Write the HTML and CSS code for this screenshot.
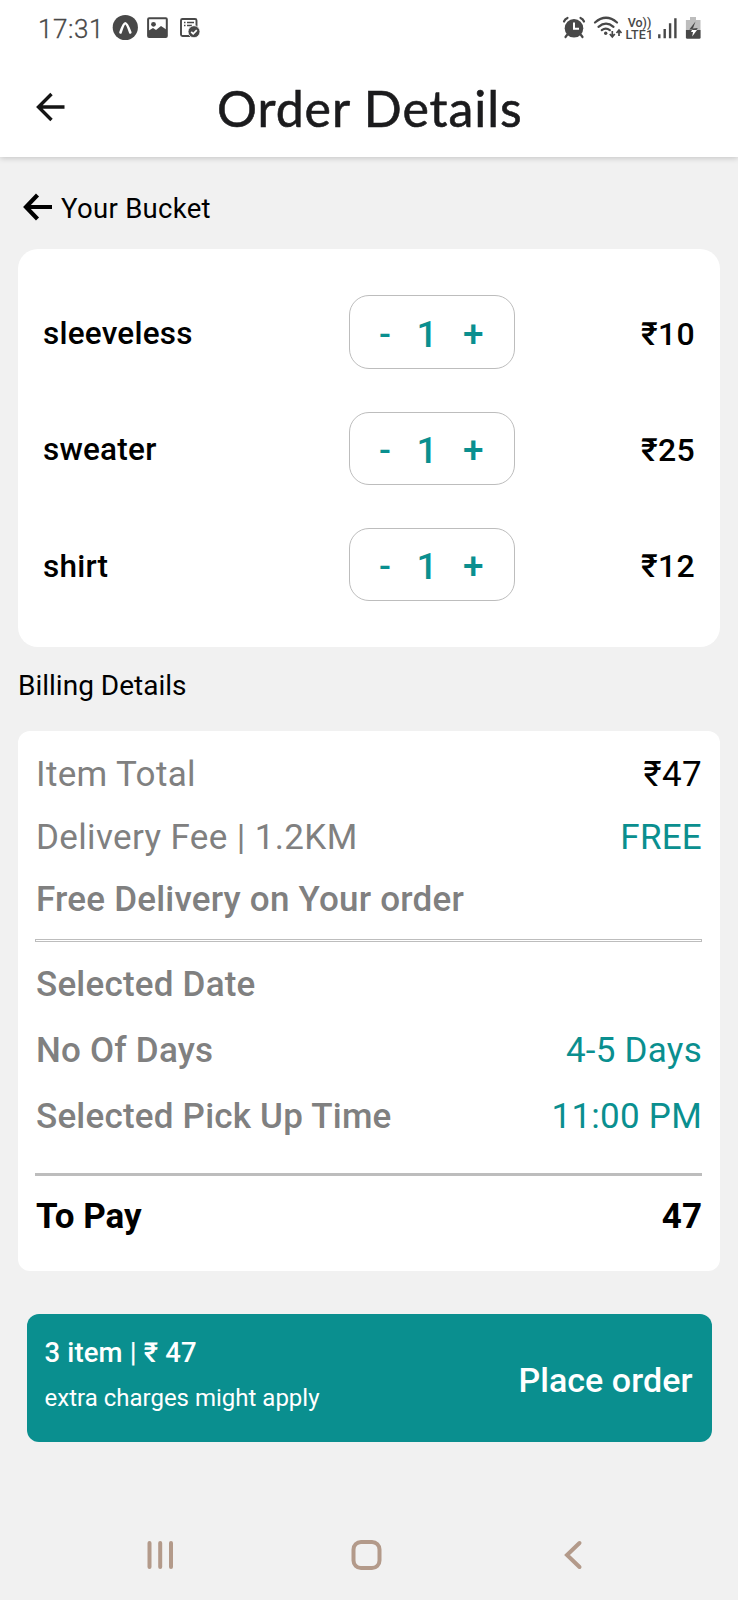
FILE: index.html
```html
<!DOCTYPE html>
<html lang="en">
<head>
<meta charset="utf-8">
<title>Order Details</title>
<link rel="stylesheet" href="styles.css">
</head>
<body>
<div class="screen">
  <header class="top">
    <div class="status">
      <span class="clock">17:31</span>
      <svg class="notif" width="90" height="28" viewBox="111 14 90 28">
        <circle cx="125.300" cy="27.500" r="12.600" fill="#484848"/>
        <path d="M120.500 32.500Q123.600 23.300 125.300 23.300T130.300 32.500" fill="none" stroke="#fff" stroke-width="2.600" stroke-linecap="round"/>
        <rect x="148.100" y="18.200" width="18.700" height="18.700" rx="1" fill="#fff" stroke="#484848" stroke-width="2"/>
        <circle cx="153.500" cy="24.300" r="2.400" fill="#484848"/>
        <path d="M148 31l5-3 3 2 5-4 6 4v7h-19z" fill="#484848"/>
        <rect x="181" y="19" width="15.500" height="17" rx="1.500" fill="none" stroke="#484848" stroke-width="1.900"/>
        <path d="M184 22.500h1.500M187 22.500h7M184 25.500h1.500M187 25.500h5" stroke="#484848" stroke-width="1.400"/>
        <circle cx="194" cy="31.700" r="6" fill="#484848" stroke="#fff" stroke-width=".8"/>
        <path d="M191.200 31.800l2 2 3.600-3.600" fill="none" stroke="#fff" stroke-width="1.700"/>
      </svg>
      <span class="grow"></span>
      <svg class="alarm" width="62" height="26" viewBox="561 15 62 26">
        <circle cx="574" cy="28.300" r="9.300" fill="#484848"/>
        <path d="M574 22.500v6.200h5" fill="none" stroke="#fff" stroke-width="2"/>
        <path d="M564 21.500q1-2.500 3.500-3.500M580.500 18q2.500 1 3.500 3.500M567 35l-1.500 2M581 35l1.500 2" fill="none" stroke="#484848" stroke-width="2.200" stroke-linecap="round"/>
        <path d="M595 22.500q11-9.500 22 0M598.500 26.800q7.500-6.300 15 0M601.800 30.200q4-3 8 0" fill="none" stroke="#484848" stroke-width="2.200" stroke-linecap="round"/>
        <circle cx="605.700" cy="33.200" r="1.700" fill="#484848"/>
        <path d="M612.300 31v5.500M609.800 34l2.500 3 2.500-3M619 36v-5.500M616.500 33l2.500-3 2.500 3" fill="none" stroke="#484848" stroke-width="1.700"/>
      </svg>
      <span class="volte"><span>Vo))</span><span class="lte">LTE1</span></span>
      <svg class="signal" width="46" height="26" viewBox="656 15 46 26">
        <path d="M659.300 34.300v4M664.700 29v9.300M670.100 23.200v15.100M675.400 18.300v20" stroke="#484848" stroke-width="2.400"/>
        <path d="M690 17h6v3h4.500v10h-14.600V20h4.100z" fill="#bdbdbd"/>
        <path d="M685.900 30h14.700v7.500q0 1.300-1.300 1.300h-12q-1.400 0-1.400-1.300z" fill="#484848"/>
        <path d="M695.500 21.500l-6.200 8h3.200z M692.500 28.500l5.300-.5-1.300 2h-4z" fill="#484848"/>
        <path d="M692 30h5l-4.800 6.500.8-4.500h-2z" fill="#fff"/>
      </svg>
    </div>
    <div class="appbar">
      <svg class="back" width="30" height="30" viewBox="0 0 30 30"><path d="M29.500 15H3.500M16.500 2L3.500 15l13 13" fill="none" stroke="#151515" stroke-width="3.400"/></svg>
      <h1>Order Details</h1>
    </div>
  </header>

  <main>
    <div class="bucket">
      <svg width="30" height="28" viewBox="0 0 30 28"><path d="M29 14H4M14.500 2L3 14l11.500 12" fill="none" stroke="#000" stroke-width="4.200"/></svg>
      <span>Your Bucket</span>
    </div>

    <section class="card items">
      <div class="item"><span class="name">sleeveless</span><span class="stepper"><b class="minus">-</b><b class="qty">1</b><b class="plus">+</b></span><span class="price">₹10</span></div>
      <div class="item"><span class="name">sweater</span><span class="stepper"><b class="minus">-</b><b class="qty">1</b><b class="plus">+</b></span><span class="price">₹25</span></div>
      <div class="item"><span class="name">shirt</span><span class="stepper"><b class="minus">-</b><b class="qty">1</b><b class="plus">+</b></span><span class="price">₹12</span></div>
    </section>

    <h2>Billing Details</h2>

    <section class="card bill">
      <div class="line"><span>Item Total</span><span class="black">₹47</span></div>
      <div class="line"><span>Delivery Fee | 1.2KM</span><span class="teal">FREE</span></div>
      <div class="line"><span class="medium">Free Delivery on Your order</span></div>
      <div class="rule double"></div>
      <div class="line tall"><span class="medium">Selected Date</span></div>
      <div class="line tall"><span class="medium">No Of Days</span><span class="teal">4-5 Days</span></div>
      <div class="line tall"><span class="medium">Selected Pick Up Time</span><span class="teal">11:00 PM</span></div>
      <div class="rule solid"></div>
      <div class="line total"><span>To Pay</span><span>47</span></div>
    </section>

    <div class="order">
      <div class="summary"><span class="count">3 item | ₹ 47</span><span class="extra">extra charges might apply</span></div>
      <span class="place">Place order</span>
    </div>
  </main>

  <nav>
    <svg width="28" height="32" viewBox="0 0 28 32"><path d="M3.500 4v24M14.200 4v24M25 4v24" stroke="#b39a8a" stroke-width="4" stroke-linecap="round"/></svg>
    <svg width="32" height="32" viewBox="0 0 32 32"><rect x="3.500" y="3" width="26" height="26" rx="7.500" fill="none" stroke="#b39a8a" stroke-width="4"/></svg>
    <svg width="22" height="32" viewBox="0 0 22 32"><path d="M17.500 4L5 16l12.500 12" fill="none" stroke="#b39a8a" stroke-width="4" stroke-linecap="round"/></svg>
  </nav>
</div>
</body>
</html>
```

FILE: styles.css
```css
* { box-sizing: border-box; }
body { margin: 0; font-family: Roboto, "Noto Sans", sans-serif; color: #000; background: #f1f1f1; }
.screen { width: 738px; height: 1600px; background: #f1f1f1; display: flex; flex-direction: column; overflow: hidden; }
svg { display: block; flex: none; }
span, b, h1, h2 { white-space: nowrap; }
.top { height: 157px; background: #fff; box-shadow: 0 1px 6px rgba(0, 0, 0, .2); }
.status { height: 56px; display: flex; align-items: center; padding: 0 36px 0 38px; color: #484848; }
.clock { font-size: 26px; width: 73px; line-height: 58px; padding-top: 2px; font-weight: 300; letter-spacing: .6px; -webkit-text-stroke: .3px #484848; }
.grow { flex: 1; }
.volte { display: flex; flex-direction: column; align-items: center; width: 33px; font-size: 12.5px; line-height: 12px; font-weight: 500; padding-top: 1px; }
.lte { letter-spacing: .2px; }
.appbar { height: 101px; display: flex; align-items: center; padding-left: 35px; }
.back { margin-top: 1px; }
h1 { margin: 2px 0 0 152px; font: 400 50px/60px Lato, "Open Sans", sans-serif; letter-spacing: .95px; color: #1b1b1d; -webkit-text-stroke: .6px #1b1b1d; }
main { padding: 0 18px; }
.bucket { height: 92px; display: flex; align-items: center; gap: 8px; padding: 7px 0 0 5px; font-size: 27.5px; letter-spacing: .3px; }
.bucket span { padding-top: 3px; }
.card { background: #fff; }
.items { height: 398px; border-radius: 20px; padding: 46px 25px 0 25px; display: flex; flex-direction: column; gap: 42.300px; }
.item { height: 74px; display: flex; align-items: center; font-size: 31.500px; font-weight: 500; }
.name { width: 306px; padding-top: 3px; letter-spacing: .22px; }
.stepper { width: 165.500px; height: 73.500px; border: 1px solid #bdbdbd; border-radius: 20px; display: grid; grid-template-columns: 70px 14px 1fr; align-items: center; color: #0a8f8f; padding: 4px 1px 0 0; }
.stepper b { font-weight: 500; text-align: center; }
.minus { font-size: 35px; }
.stepper .qty { font-size: 37px; justify-self: center; }
.plus { font-size: 37px; }
.price { margin-left: auto; padding-top: 3px; font-size: 32px; letter-spacing: .3px; }
h2 { margin: 0; height: 84px; font-size: 28px; font-weight: 400; line-height: 78px; }
.bill { height: 540px; border-radius: 12px; padding: 13px 18px 0; }
.line { height: 62.500px; line-height: 62.500px; display: flex; justify-content: space-between; font-size: 35px; letter-spacing: .36px; color: #808080; }
.black { color: #000; }
.teal { color: #0a8f8f; letter-spacing: .25px; }
.line .medium { font-weight: 500; letter-spacing: .21px; }
.rule { height: 3px; width: 667px; margin-left: -1px; }
.double { border: 1px solid #bdbdbd; margin-top: 7px; margin-bottom: 10px; }
.tall { height: 66px; line-height: 66px; }
.solid { background: #bdbdbd; margin-top: 23px; }
.total { height: 82px; line-height: 82px; color: #000; font-weight: 700; letter-spacing: 0; }
.order { margin: 43px 8.500px 0 9px; height: 128px; border-radius: 12px; background: #0a8f8f; color: #fff; display: flex; justify-content: space-between; align-items: center; padding: 0 19px 0 17.500px; }
.summary { display: flex; flex-direction: column; height: 128px; padding-top: 18px; }
.count { font-size: 27.500px; font-weight: 500; line-height: 42px; letter-spacing: .15px; }
.extra { font-size: 24px; line-height: 49px; }
.place { font-size: 34px; font-weight: 500; margin-top: 3px; letter-spacing: .05px; }
nav { margin-top: 97px; height: 32px; display: grid; grid-template-columns: 28px 32px 22px; column-gap: 176px; padding-left: 146px; }
nav svg:last-child { margin-left: 4px; }
```
